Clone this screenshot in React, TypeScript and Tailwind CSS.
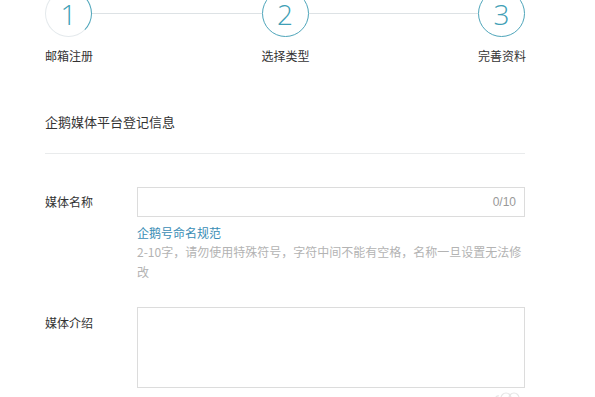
import React from "react";

const font = { fontFamily: '"Microsoft YaHei", "Noto Sans CJK SC", "Noto Sans", sans-serif' };

function Circle({ n, first }: { n: string; first?: boolean }) {
  return (
    <div
      className={
        "w-[47px] h-[47px] shrink-0 rounded-full border-[1.5px] flex items-center justify-center bg-white " +
        (first ? "border-[#e4e9ec] border-r-[#4ea5ba]" : "border-[#4ea5ba]")
      }
    >
      <span
        className="text-[28px] font-light leading-none text-[#3f9fb6]"
        style={{ fontFamily: '"Open Sans", "Liberation Sans", sans-serif' }}
      >
        {n}
      </span>
    </div>
  );
}

export default function App() {
  return (
    <div className="relative w-[595px] h-[397px] overflow-hidden bg-white text-[#333]" style={font}>
      <div className="mx-[45px] w-[480px] -mt-[10px]">
        {/* steps */}
        <div className="flex items-center">
          <Circle n="1" first />
          <div className="flex-1 h-px bg-[#dde2e5]" />
          <Circle n="2" />
          <div className="flex-1 h-px bg-[#dde2e5]" />
          <Circle n="3" />
        </div>
        <div className="mt-[11px] flex justify-between text-[12px] leading-[16px] text-[#333]">
          <span className="w-[47px] text-center whitespace-nowrap">邮箱注册</span>
          <span className="w-[47px] text-center whitespace-nowrap">选择类型</span>
          <span className="w-[47px] text-center whitespace-nowrap">完善资料</span>
        </div>

        {/* title */}
        <div className="mt-[48px] text-[13px] leading-[20px] text-[#333]">企鹅媒体平台登记信息</div>
        <div className="mt-[21px] h-px bg-[#e9ebec]" />

        {/* name row */}
        <div className="mt-[33px] flex items-center">
          <div className="w-[92px] shrink-0 text-[12px] text-[#333]">媒体名称</div>
          <div className="flex-1 h-[30px] border border-[#dcdcdc] flex items-center justify-end pr-[8px]">
            <span className="text-[12px] text-[#999]" style={{ fontFamily: '"Liberation Sans", sans-serif' }}>
              0/10
            </span>
          </div>
        </div>
        <div className="ml-[92px] mt-[7px]">
          <div className="text-[12px] leading-[18px] text-[#3a8db5]">企鹅号命名规范</div>
          <div className="text-[12px] leading-[20px] text-[#b3b3b3]">
            2-10字，请勿使用特殊符号，字符中间不能有空格，名称一旦设置无法修改
          </div>
        </div>

        {/* intro row */}
        <div className="mt-[25px] flex items-start">
          <div className="w-[92px] shrink-0 pt-[8px] text-[12px] leading-[16px] text-[#333]">媒体介绍</div>
          <div className="flex-1 h-[81px] border border-[#dcdcdc]" />
        </div>
      </div>

      {/* watermark fragment */}
      <svg className="absolute left-[493px] top-[388px]" width="28" height="12" viewBox="0 0 28 12">
        <path d="M2 12 Q3 7 6 8" fill="none" stroke="#e6e6e6" strokeWidth="1.2" />
        <circle cx="13" cy="10" r="5" fill="none" stroke="#e6e6e6" strokeWidth="1.2" />
        <circle cx="21" cy="10" r="5" fill="none" stroke="#e6e6e6" strokeWidth="1.2" />
      </svg>
    </div>
  );
}
